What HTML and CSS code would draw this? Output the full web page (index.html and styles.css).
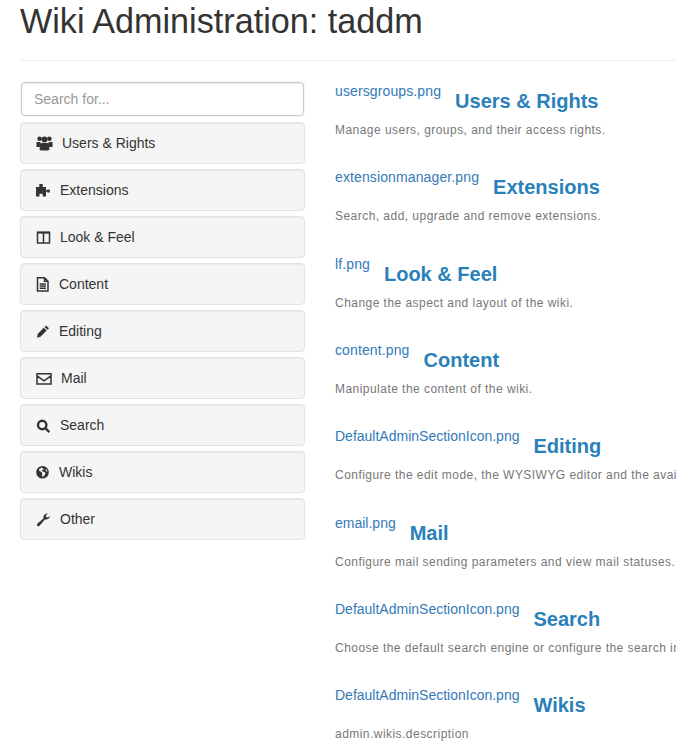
FILE: index.html
```html
<!DOCTYPE html>
<html lang="en">
<head>
<meta charset="utf-8">
<title>Wiki Administration: taddm</title>
<link rel="stylesheet" href="styles.css">
</head>
<body>
<div class="page">
  <header class="page-header"><h1>Wiki Administration: taddm</h1></header>
  <div class="layout">
    <aside class="sidebar">
      <input class="search" type="text" placeholder="Search for...">
      <a class="panel"><svg class="icon w17" viewBox="0 0 17 15"><circle cx="3.6" cy="2.800" r="2.300"/><circle cx="13.400" cy="2.800" r="2.300"/><circle cx="8.500" cy="3.400" r="3"/><path d="M.5 6h3.800l.6 2.300L3.600 11H.5zM16.500 6h-3.800l-.6 2.300 1.300 2.700h3.100z"/><path d="M5 7h7l1.300 2.200v4.400l-1 1H4.700l-1-1V9.200z"/></svg><span>Users &amp; Rights</span></a>
      <a class="panel"><svg class="icon w15" viewBox="0 0 15 15"><path d="M3.300 1h3.400v3h3.300v3.200h1.200V6.500h2.600v3h-2.600v-.8H10V13.500H6.700v-2.800H3.500v2.800H0V4h3.300z"/></svg><span>Extensions</span></a>
      <a class="panel"><svg class="icon w15 stroked" viewBox="0 0 15 15"><path d="M1.500 2.500h12v10.500h-12zM7.500 2.500v10.500"/><path class="bar" d="M1 2.500h13"/></svg><span>Look &amp; Feel</span></a>
      <a class="panel"><svg class="icon w14 stroked" viewBox="0 0 14 15"><path d="M1.500 .8h7l3.500 3.500V14H1.500zM8.500 .8v3.500H12M3.700 7h6.200M3.700 9.100h6.200M3.700 11.200h6.200"/></svg><span>Content</span></a>
      <a class="panel"><svg class="icon w14" viewBox="0 0 14 15"><path d="M10 1.400l3 2.800-1.500 1.600-3-2.800zM7.700 3.800l3 2.800-6.200 6.200L1 13.700l.7-3.600z"/></svg><span>Editing</span></a>
      <a class="panel"><svg class="icon w16 stroked" viewBox="0 0 16 15"><path d="M1 2.800h14V13H1zM1 4.800l7 5 7-5"/></svg><span>Mail</span></a>
      <a class="panel"><svg class="icon w15 stroked heavy" viewBox="0 0 15 15"><circle cx="6.200" cy="7" r="4.200"/><path d="M9.400 10.200l3.900 3.900"/></svg><span>Search</span></a>
      <a class="panel"><svg class="icon w14" viewBox="0 0 14 15"><path fill-rule="evenodd" d="M6.500 1a6.300 6.300 0 1 1 0 12.600A6.300 6.300 0 0 1 6.500 1zM5.500 2.500L3 4.200l.4 1.700 2.200 1 .8 2-.5 2.300 1.200.5 2-2.300.2-2-2.400-1-1.100-.3.500-1.300 2-.4zM10 3.900l-.7 1.200 1.600 1.700.8-.2z"/></svg><span>Wikis</span></a>
      <a class="panel"><svg class="icon w15" viewBox="0 0 15 15"><path d="M14 3.900a4 4 0 0 1-5.100 3.500L3.500 13.800a1.400 1.400 0 0 1-2.100-.1 1.400 1.400 0 0 1-.1-2l6.100-5.300A4 4 0 0 1 12 1.500L9.800 3.300l.3 1.700 1.700.5z"/></svg><span>Other</span></a>
    </aside>
    <main class="content">
      <section class="item"><div class="title"><a class="file wide">usersgroups.png</a><h2>Users &amp; Rights</h2></div><p>Manage users, groups, and their access rights.</p></section>
      <section class="item"><div class="title"><a class="file wide">extensionmanager.png</a><h2>Extensions</h2></div><p>Search, add, upgrade and remove extensions.</p></section>
      <section class="item"><div class="title"><a class="file wide">lf.png</a><h2>Look &amp; Feel</h2></div><p>Change the aspect and layout of the wiki.</p></section>
      <section class="item"><div class="title"><a class="file wide">content.png</a><h2>Content</h2></div><p>Manipulate the content of the wiki.</p></section>
      <section class="item"><div class="title"><a class="file">DefaultAdminSectionIcon.png</a><h2>Editing</h2></div><p>Configure the edit mode, the WYSIWYG editor and the available syntaxes.</p></section>
      <section class="item"><div class="title"><a class="file">email.png</a><h2>Mail</h2></div><p>Configure mail sending parameters and view mail statuses.</p></section>
      <section class="item"><div class="title"><a class="file">DefaultAdminSectionIcon.png</a><h2>Search</h2></div><p>Choose the default search engine or configure the search index.</p></section>
      <section class="item"><div class="title"><a class="file">DefaultAdminSectionIcon.png</a><h2>Wikis</h2></div><p>admin.wikis.description</p></section>
    </main>
  </div>
</div>
</body>
</html>
```
FILE: styles.css
```css
* { box-sizing: border-box; }
html, body { margin: 0; height: 741px; overflow: hidden; background: #fff; }
body { font-family: "Liberation Sans", Arial, sans-serif; font-size: 14px; line-height: 20px; color: #333; }
.page { padding-left: 20px; width: 676px; }
.page-header { height: 61px; border-bottom: 1px solid #eee; }
h1 { margin: 0; padding-top: 1px; font-size: 34.2px; line-height: 40px; font-weight: 400; white-space: nowrap; }
.layout { display: flex; padding-top: 20px; }
.sidebar { width: 285px; flex: none; display: flex; flex-direction: column; gap: 5px; margin-top: 1px; }
.search { height: 34px; width: 283px; margin: 0 1px 1px; padding: 6px 12px; border: 1px solid #ccc; border-radius: 4px; font: 14px/20px "Liberation Sans", Arial, sans-serif; color: #555; box-shadow: inset 0 1px 1px rgba(0,0,0,.075), 0 0 0 1px rgba(0,0,0,.04); }
.search::placeholder { color: #999; opacity: 1; }
.panel { display: flex; align-items: center; gap: 9px; height: 42px; padding: 0 15px; background: #f5f5f5; border: 1px solid #e3e3e3; border-radius: 4px; box-shadow: inset 0 1px 1px rgba(0,0,0,.05); color: #333; }
.icon { height: 15px; flex: none; fill: #333; }
.stroked { fill: none; stroke: #333; stroke-width: 1.5; }
.bar { stroke-width: 2; }
.heavy { stroke-width: 2.4; }
.w17 { width: 17px; }
.w16 { width: 16px; }
.w15 { width: 15px; }
.w14 { width: 14px; }
.content { margin-left: 30px; flex: none; width: 500px; white-space: nowrap; }
.item { height: 86.33px; }
.title { display: flex; align-items: flex-start; height: 38px; }
.file { color: #337ab7; margin-right: 14px; }
.wide { letter-spacing: .12px; }
h2 { margin: 9px 0 0; font-size: 20px; line-height: 22px; font-weight: 700; color: #2a80b9; }
p { margin: 0; padding-top: 1px; font-size: 12px; line-height: 20px; letter-spacing: .46px; color: #777; }
```
